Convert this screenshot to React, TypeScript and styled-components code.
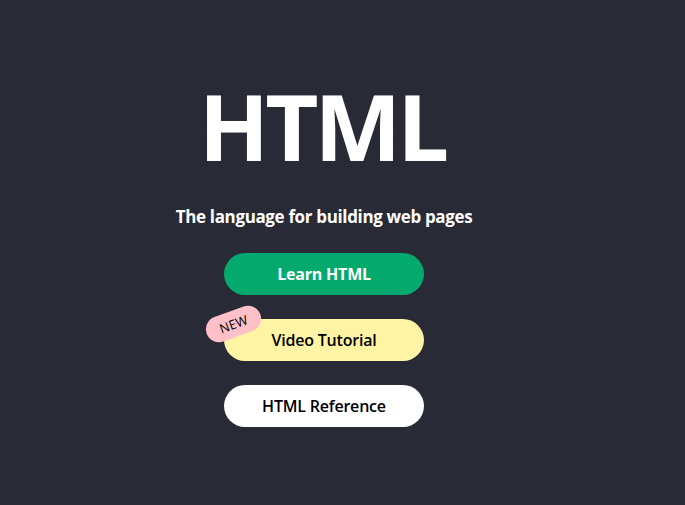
import React from "react";
import styled, { createGlobalStyle } from "styled-components";

const Global = createGlobalStyle`
  html, body { margin: 0; padding: 0; background: #282A35; }
  body { font-family: "Open Sans", "Noto Sans", sans-serif; }
`;

const Page = styled.main`
  width: 648px;
  min-height: 505px;
  display: flex;
  flex-direction: column;
  align-items: center;
  padding-top: 71px;
  box-sizing: border-box;
`;

const Title = styled.h1`
  margin: 0;
  color: #fff;
  font-family: "Open Sans", sans-serif;
  font-weight: 700;
  font-size: 92px;
  line-height: 110px;
  letter-spacing: -4px;
  text-indent: -4px;
`;

const Subtitle = styled.p`
  margin: 24px 0 0;
  color: #fff;
  font-family: "Open Sans", sans-serif;
  font-weight: 700;
  font-size: 17px;
  line-height: 24px;
  letter-spacing: -0.35px;
`;

const Buttons = styled.div`
  margin-top: 24px;
  display: flex;
  flex-direction: column;
  gap: 24px;
`;

const ButtonWrap = styled.div`
  position: relative;
`;

const PillButton = styled.a<{ $bg: string; $fg: string; $bold?: boolean }>`
  display: flex;
  align-items: center;
  justify-content: center;
  width: 200px;
  height: 42px;
  border-radius: 21px;
  background: ${(p) => p.$bg};
  color: ${(p) => p.$fg};
  font-family: "Open Sans", sans-serif;
  font-weight: ${(p) => (p.$bold ? 700 : 600)};
  font-size: 16px;
  letter-spacing: -0.2px;
  text-decoration: none;
`;

const Badge = styled.span`
  position: absolute;
  left: -19px;
  top: -8px;
  width: 57px;
  height: 26px;
  border-radius: 13px;
  background: #FFC0C7;
  color: #000;
  font-family: "Open Sans", sans-serif;
  font-size: 13px;
  display: flex;
  align-items: center;
  justify-content: center;
  transform: rotate(-20deg);
`;

export default function App() {
  return (
    <>
      <Global />
      <Page>
        <Title>HTML</Title>
        <Subtitle>The language for building web pages</Subtitle>
        <Buttons>
          <PillButton $bg="#04AA6D" $fg="#fff" $bold>Learn HTML</PillButton>
          <ButtonWrap>
            <PillButton $bg="#FFF4A3" $fg="#000">Video Tutorial</PillButton>
            <Badge>NEW</Badge>
          </ButtonWrap>
          <PillButton $bg="#fff" $fg="#000">HTML Reference</PillButton>
        </Buttons>
      </Page>
    </>
  );
}
